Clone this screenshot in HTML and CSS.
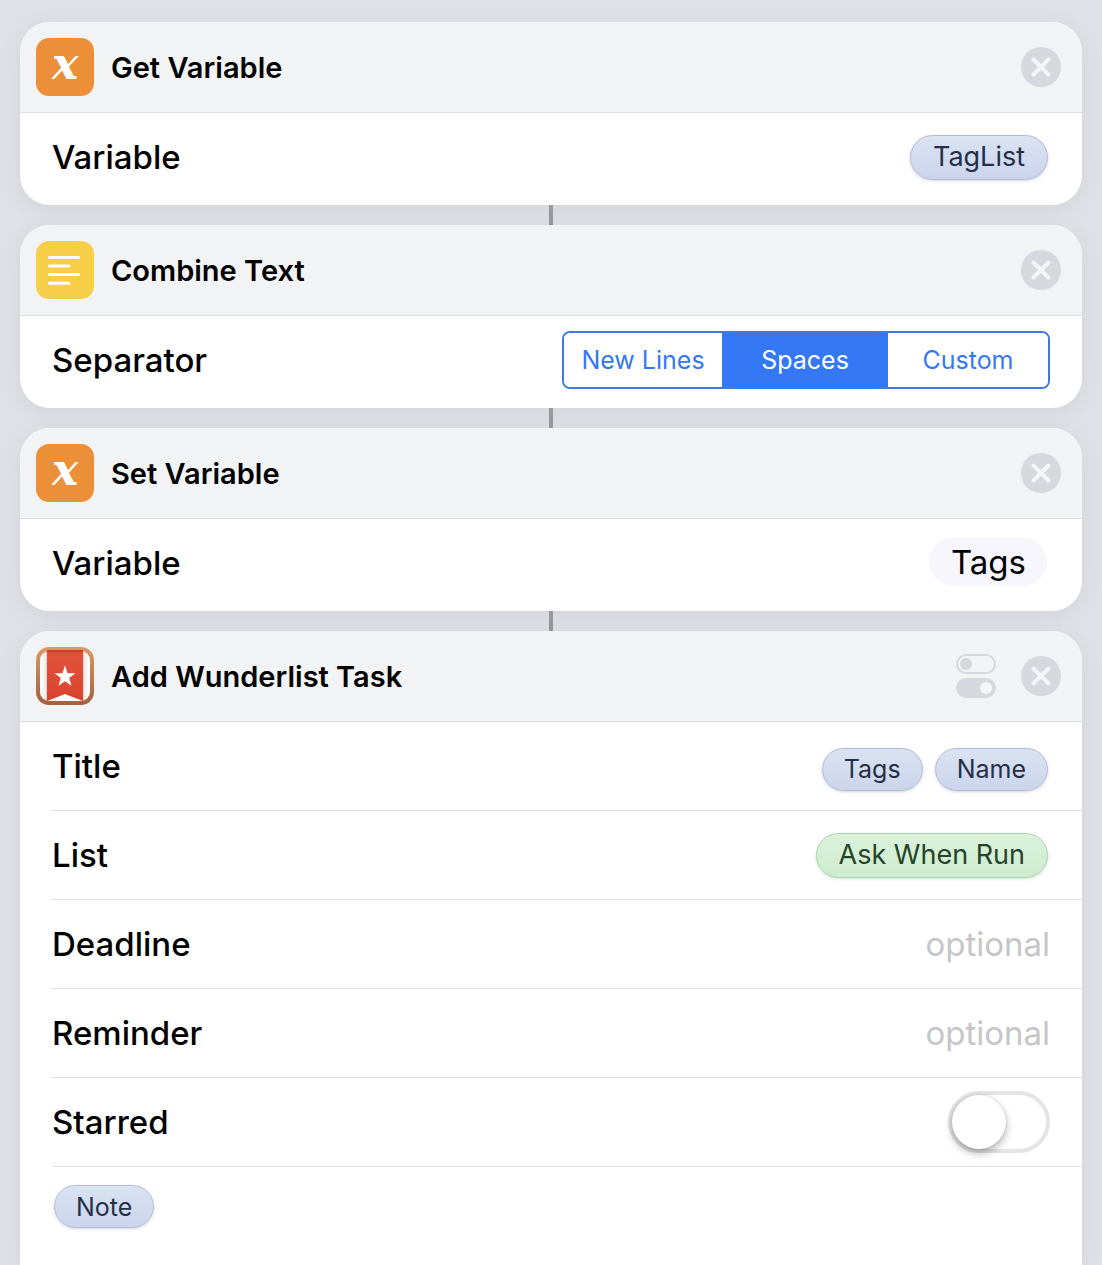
FILE: index.html
```html
<!DOCTYPE html>
<html lang="en">
<head>
<meta charset="utf-8">
<meta name="viewport" content="width=device-width, initial-scale=1">
<title>Shortcut editor</title>
<link rel="stylesheet" href="styles.css">
</head>
<body>
<svg class="defs" width="0" height="0" aria-hidden="true">
  <symbol id="close" viewBox="0 0 40 40">
    <circle cx="20" cy="20" r="20" fill="#d7d8dd"/>
    <path d="M12.500 12.500 L27.500 27.500 M27.500 12.500 L12.500 27.500" stroke="#f4f5f7" stroke-width="4" stroke-linecap="round"/>
  </symbol>
</svg>
<main class="workflow">
  <section class="card">
    <header class="card-header">
      <span class="icon icon-variable" aria-hidden="true">&#x1D499;</span>
      <h2 class="card-title">Get Variable</h2>
      <button class="icon-button" type="button" aria-label="Remove Get Variable"><svg width="40" height="40"><use href="#close"/></svg></button>
    </header>
    <div class="rows">
      <div class="row">
        <span class="label">Variable</span>
        <button class="token" type="button">TagList</button>
      </div>
    </div>
  </section>
  <div class="connector"></div>
  <section class="card">
    <header class="card-header">
      <span class="icon icon-text" aria-hidden="true">
        <svg width="58" height="58" viewBox="0 0 58 58"><path d="M13.500 16.500H42.500M13.500 25H33M13.500 33.500H42.500M13.500 42.200H33" fill="none" stroke="#fff" stroke-width="3" stroke-linecap="round"/></svg>
      </span>
      <h2 class="card-title">Combine Text</h2>
      <button class="icon-button" type="button" aria-label="Remove Combine Text"><svg width="40" height="40"><use href="#close"/></svg></button>
    </header>
    <div class="rows">
      <div class="row">
        <span class="label" id="separator">Separator</span>
        <div class="segments" role="group" aria-labelledby="separator">
          <button class="segment" type="button" aria-pressed="false">New Lines</button>
          <button class="segment selected" type="button" aria-pressed="true">Spaces</button>
          <button class="segment" type="button" aria-pressed="false">Custom</button>
        </div>
      </div>
    </div>
  </section>
  <div class="connector"></div>
  <section class="card">
    <header class="card-header">
      <span class="icon icon-variable" aria-hidden="true">&#x1D499;</span>
      <h2 class="card-title">Set Variable</h2>
      <button class="icon-button" type="button" aria-label="Remove Set Variable"><svg width="40" height="40"><use href="#close"/></svg></button>
    </header>
    <div class="rows">
      <div class="row">
        <label class="label" for="variable-name">Variable</label>
        <input class="name-field" id="variable-name" type="text" value="Tags">
      </div>
    </div>
  </section>
  <div class="connector"></div>
  <section class="card card-open">
    <header class="card-header">
      <span class="icon" aria-hidden="true">
        <svg width="58" height="58" viewBox="0 0 58 58">
          <defs>
            <linearGradient id="wood" x1="0" y1="0" x2="0" y2="1"><stop offset="0" stop-color="#d99a66"/><stop offset="1" stop-color="#a2603f"/></linearGradient>
            <linearGradient id="ribbon" x1="0" y1="0" x2="0" y2="1"><stop offset="0" stop-color="#e04a31"/><stop offset=".15" stop-color="#e2513a"/><stop offset="1" stop-color="#d8432f"/></linearGradient>
            <linearGradient id="paper" x1="0" y1="0" x2="1" y2="0"><stop offset="0" stop-color="#fff"/><stop offset=".1" stop-color="#f4f0ec"/><stop offset=".15" stop-color="#d5cdc8"/><stop offset=".85" stop-color="#d5cdc8"/><stop offset=".9" stop-color="#f4f0ec"/><stop offset="1" stop-color="#fff"/></linearGradient>
          </defs>
          <rect width="58" height="58" rx="13" fill="url(#wood)"/>
          <rect x="4" y="4" width="50" height="50" rx="9" fill="url(#paper)"/>
          <path d="M11 54L29 47L47 54Z" fill="#fff"/>
          <path d="M11 3H47V54L29 47L11 54Z" fill="url(#ribbon)"/>
          <path d="M11 3H47V5H11Z" fill="#c9412c"/>
          <path d="M29 18.500L31.600 26.200H39.500L33.200 31L35.500 38.800L29 34.200L22.500 38.800L24.800 31L18.500 26.200H26.400Z" fill="#fff"/>
        </svg>
      </span>
      <h2 class="card-title">Add Wunderlist Task</h2>
      <button class="icon-button" type="button" aria-label="Options">
        <svg width="40" height="44" viewBox="0 0 40 44"><rect x="1" y="1" width="38" height="18" rx="9" fill="none" stroke="#d7d8dd" stroke-width="2"/><circle cx="10" cy="10" r="6" fill="#d7d8dd"/><rect y="24" width="40" height="20" rx="10" fill="#d7d8dd"/><circle cx="30" cy="34" r="6" fill="#f4f5f7"/></svg>
      </button>
      <button class="icon-button" type="button" aria-label="Remove Add Wunderlist Task"><svg width="40" height="40"><use href="#close"/></svg></button>
    </header>
    <div class="rows">
      <div class="row">
        <span class="label">Title</span>
        <div class="tokens">
          <button class="token token-small" type="button">Tags</button>
          <button class="token token-small" type="button">Name</button>
        </div>
      </div>
      <div class="row">
        <span class="label">List</span>
        <button class="token token-ask" type="button">Ask When Run</button>
      </div>
      <div class="row">
        <label class="label" for="deadline">Deadline</label>
        <input class="field" id="deadline" type="text" placeholder="optional">
      </div>
      <div class="row">
        <label class="label" for="reminder">Reminder</label>
        <input class="field" id="reminder" type="text" placeholder="optional">
      </div>
      <div class="row">
        <label class="label" for="starred">Starred</label>
        <input class="switch" id="starred" type="checkbox" role="switch">
      </div>
      <div class="note">
        <button class="token token-small" type="button">Note</button>
      </div>
    </div>
  </section>
</main>
</body>
</html>
```
FILE: styles.css
```css
* {
  box-sizing: border-box;
}

body {
  margin: 0;
  background: #e0e1e6;
  color: #000;
  font-family: Inter, "Liberation Sans", sans-serif;
}

button,
input {
  margin: 0;
  font-family: inherit;
}

.defs {
  position: absolute;
}

.workflow {
  display: flex;
  flex-direction: column;
  min-height: 100vh;
  padding: 22px 20px 0;
}

.card {
  border-radius: 30px;
  background: #fff;
  box-shadow: 0 4px 24px rgba(0, 0, 0, 0.06);
}

.card-open {
  flex: 1;
  border-radius: 30px 30px 0 0;
}

.connector {
  width: 4px;
  height: 20px;
  align-self: center;
  background: #98989d;
}

.card-header {
  display: flex;
  align-items: center;
  gap: 25px;
  height: 91px;
  padding: 0 21px 0 16px;
  border-bottom: 1px solid #dddee1;
  border-radius: 30px 30px 0 0;
  background: #f2f3f5;
}

.icon {
  flex: none;
  width: 58px;
  height: 58px;
  border-radius: 13px;
}

.icon svg,
.icon-button svg {
  display: block;
}

.icon-variable {
  background: #eb8f39;
  color: #fff;
  font: 44px/56px "DejaVu Math TeX Gyre", "DejaVu Serif", serif;
  text-align: center;
  overflow: hidden;
}

.icon-text {
  background: #f6ce48;
}

.card-title {
  flex: 1;
  margin: 0 0 0 -8px;
  padding-top: 2px;
  font-size: 29px;
  font-weight: 600;
  line-height: 36px;
}

.icon-button {
  padding: 0;
  border: 0;
  background: none;
}

.rows {
  padding: 0 0 4px 32px;
}

.row {
  display: flex;
  align-items: center;
  justify-content: space-between;
  height: 89px;
  padding-right: 32px;
  border-bottom: 1px solid #dfe0e3;
}

.row:last-child {
  height: 88px;
  border-bottom: 0;
}

.label {
  font-size: 33px;
  font-weight: 500;
  line-height: 40px;
}

.token {
  height: 45px;
  margin-right: 2px;
  padding: 0 22px;
  border: 1px solid #b3bcd6;
  border-radius: 23px;
  background: linear-gradient(#dae3f3, #ccd4ec);
  box-shadow: 0 1px 3px rgba(70, 90, 150, 0.25);
  color: #253047;
  font-size: 27px;
  line-height: 32px;
}

.token-small {
  height: 43px;
  padding: 0 21px;
  font-size: 25px;
}

.token-ask {
  border-color: #afd2b1;
  background: linear-gradient(#daf3da, #cdebcf);
  box-shadow: 0 1px 3px rgba(60, 130, 70, 0.25);
  color: #26432a;
}

.tokens {
  display: flex;
  gap: 10px;
  padding-top: 6px;
}

.segments {
  display: grid;
  grid-template-columns: 158px 166px 160px;
  height: 58px;
  overflow: hidden;
  border: 2px solid #3f79dc;
  border-radius: 8px;
}

.segment {
  padding: 0;
  border: 0;
  background: #fff;
  color: #3478f6;
  font-size: 25px;
}

.segment.selected {
  background: #3478f6;
  color: #fff;
}

.name-field {
  width: 118px;
  height: 49px;
  margin: 0 3px 3px 0;
  padding: 0 21px 0 0;
  border: 0;
  border-radius: 25px;
  background: #f6f6fc;
  color: #000;
  font-size: 33px;
  text-align: right;
}

.field {
  flex: 1;
  min-width: 0;
  padding: 0;
  border: 0;
  background: none;
  font-size: 33px;
  line-height: 40px;
  text-align: right;
}

.field::placeholder {
  color: #c5c6ca;
  opacity: 1;
}

.switch {
  appearance: none;
  display: flex;
  align-items: center;
  width: 102px;
  height: 62px;
  border: 4px solid #e5e5e5;
  border-radius: 31px;
  background: #fff;
}

.switch::before {
  content: "";
  width: 54px;
  height: 54px;
  border-radius: 50%;
  background: #fff;
  box-shadow: 0 4px 8px rgba(0, 0, 0, 0.3), 0 0 2px rgba(0, 0, 0, 0.2);
}

.switch:checked {
  justify-content: flex-end;
  background: #4cd964;
}

.note {
  padding: 18px 32px 32px 2px;
}
```
